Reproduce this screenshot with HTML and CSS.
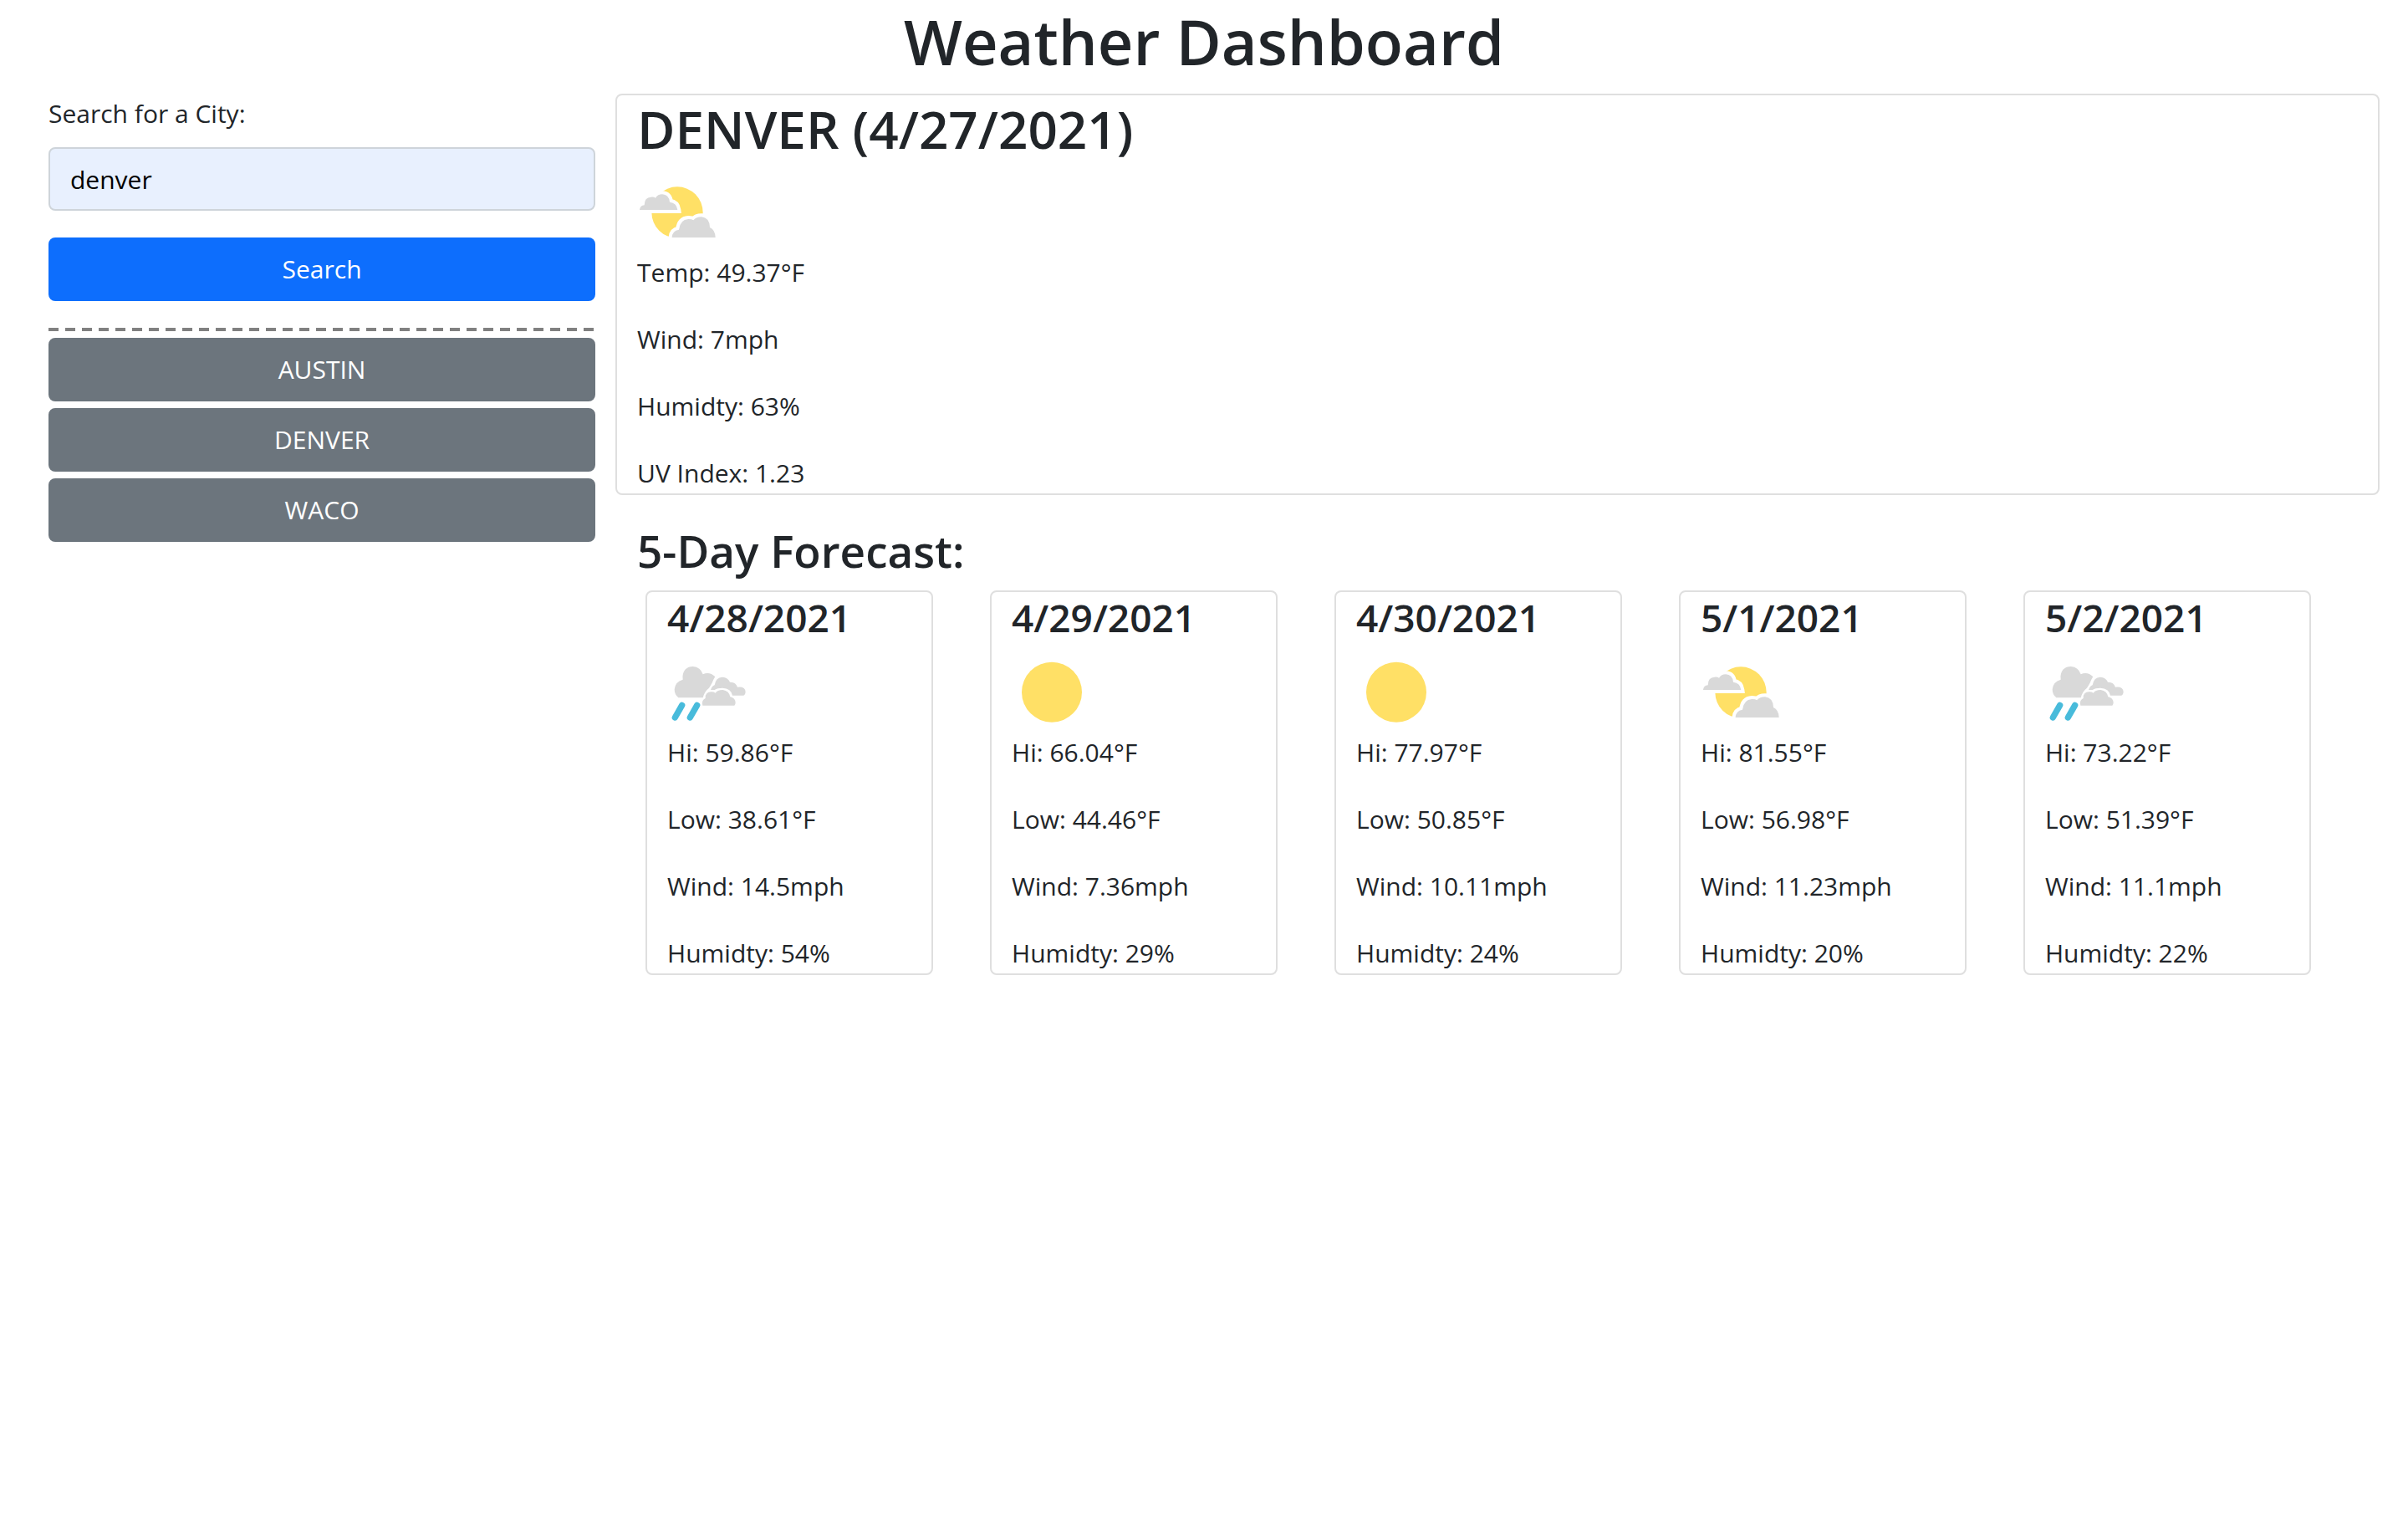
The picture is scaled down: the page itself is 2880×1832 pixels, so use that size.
FILE: index.html
```html
<!DOCTYPE html>
<html lang="en">
<head>
<meta charset="utf-8">
<meta name="viewport" content="width=device-width, initial-scale=1">
<title>Weather Dashboard</title>
<link rel="stylesheet" href="styles.css">
</head>
<body>
<svg class="sprite" aria-hidden="true">
  <symbol id="partly-cloudy" viewBox="42 3 300 285">
    <circle class="sun" cx="186" cy="144" r="92"/>
    <path class="cloud cloud-cut" d="M51 135Q52 120 68 118Q68 90 92 89Q102 88 108 92Q116 79 132 79Q156 80 159 107Q184 110 187 135Z"/>
    <path class="cloud cloud-cut" d="M167 234Q168 210 192 206Q196 170 226 168Q238 168 244 172Q254 160 273 160Q302 163 303 198Q322 206 323 234Z"/>
  </symbol>
  <symbol id="rain" viewBox="54 3 300 285">
    <path class="cloud" d="M94 163Q80 152 80 133Q82 106 110 98C106 64 126 51 146 51Q174 53 182 79Q206 68 226 88C216 102 218 110 204 128Q188 140 182 163Z"/>
    <path class="cloud" d="M210 135Q214 122 224 118Q228 90 252 89Q272 90 279 107Q300 106 306 125Q334 122 335 142Q334 153 328 155L288 155Q284 130 252 128Q234 128 224 135Z"/>
    <path class="cloud" d="M181 191Q176 172 191 165Q190 142 212 142Q222 142 227 146Q234 135 253 135Q276 138 280 160Q299 164 299 182Q298 188 295 191Z"/>
    <path class="drops" d="M82 234L107 190M136 234L161 190"/>
  </symbol>
  <symbol id="clear" viewBox="30 3 300 285">
    <circle class="sun" cx="174" cy="143" r="108"/>
  </symbol>
</svg>

<header>
  <h1 class="page-title">Weather Dashboard</h1>
</header>

<div class="layout">
  <aside class="sidebar">
    <form class="search" onsubmit="return false">
      <label class="search-label" for="city">Search for a City:</label>
      <input class="search-input" id="city" type="text" value="denver">
      <button class="btn btn-primary" type="submit">Search</button>
    </form>
    <hr class="divider">
    <div class="history">
      <button class="btn btn-secondary" type="button">AUSTIN</button>
      <button class="btn btn-secondary" type="button">DENVER</button>
      <button class="btn btn-secondary" type="button">WACO</button>
    </div>
  </aside>

  <main>
    <section class="card">
      <h2 class="city-name">DENVER (4/27/2021)</h2>
      <svg class="icon" role="img" aria-label="Partly cloudy"><use href="#partly-cloudy"/></svg>
      <div class="stats">
        <p>Temp: 49.37°F</p>
        <p>Wind: 7mph</p>
        <p>Humidty: 63%</p>
        <p>UV Index: 1.23</p>
      </div>
    </section>

    <section class="forecast">
      <h3 class="forecast-title">5-Day Forecast:</h3>
      <div class="days">
        <article class="card">
          <h4 class="day-date">4/28/2021</h4>
          <svg class="icon" role="img" aria-label="Rain"><use href="#rain"/></svg>
          <div class="stats">
            <p>Hi: 59.86°F</p>
            <p>Low: 38.61°F</p>
            <p>Wind: 14.5mph</p>
            <p>Humidty: 54%</p>
          </div>
        </article>
        <article class="card">
          <h4 class="day-date">4/29/2021</h4>
          <svg class="icon" role="img" aria-label="Clear"><use href="#clear"/></svg>
          <div class="stats">
            <p>Hi: 66.04°F</p>
            <p>Low: 44.46°F</p>
            <p>Wind: 7.36mph</p>
            <p>Humidty: 29%</p>
          </div>
        </article>
        <article class="card">
          <h4 class="day-date">4/30/2021</h4>
          <svg class="icon" role="img" aria-label="Clear"><use href="#clear"/></svg>
          <div class="stats">
            <p>Hi: 77.97°F</p>
            <p>Low: 50.85°F</p>
            <p>Wind: 10.11mph</p>
            <p>Humidty: 24%</p>
          </div>
        </article>
        <article class="card">
          <h4 class="day-date">5/1/2021</h4>
          <svg class="icon" role="img" aria-label="Partly cloudy"><use href="#partly-cloudy"/></svg>
          <div class="stats">
            <p>Hi: 81.55°F</p>
            <p>Low: 56.98°F</p>
            <p>Wind: 11.23mph</p>
            <p>Humidty: 20%</p>
          </div>
        </article>
        <article class="card">
          <h4 class="day-date">5/2/2021</h4>
          <svg class="icon" role="img" aria-label="Rain"><use href="#rain"/></svg>
          <div class="stats">
            <p>Hi: 73.22°F</p>
            <p>Low: 51.39°F</p>
            <p>Wind: 11.1mph</p>
            <p>Humidty: 22%</p>
          </div>
        </article>
      </div>
    </section>
  </main>
</div>
</body>
</html>
```
FILE: styles.css
```css
*,
*::before,
*::after {
  box-sizing: border-box;
}

body {
  margin: 0;
  background: #fff;
  color: #212529;
  font-family: "Segoe UI", "Open Sans", "Noto Sans", sans-serif;
  font-size: 30px;
  line-height: 48px;
}

h1, h2, h3, h4 {
  margin: 0 0 12px;
  font-weight: 600;
}

p {
  margin: 0;
}

.sprite {
  display: none;
}

.page-title {
  font-size: 74px;
  line-height: 100px;
  text-align: center;
}

.layout {
  display: grid;
  grid-template-columns: minmax(0, 31fr) minmax(0, 100fr);
  gap: 24px;
  padding: 0 34px 0 58px;
}

/* Search column */
.search {
  display: flex;
  flex-direction: column;
}

.search-label {
  margin-bottom: 16px;
}

.search-input {
  height: 76px;
  margin-bottom: 32px;
  padding: 12px 24px;
  border: 2px solid #ced4da;
  border-radius: 8px;
  background: #e8f0fe;
  color: #000;
  font: inherit;
}

.btn {
  height: 76px;
  padding: 12px 24px;
  border: 2px solid transparent;
  border-radius: 8px;
  color: #fff;
  font: inherit;
  line-height: 48px;
  text-align: center;
  cursor: pointer;
}

.btn-primary {
  border-color: #0d6efd;
  background: #0d6efd;
}

.btn-secondary {
  border-color: #6c757d;
  background: #6c757d;
}

.divider {
  height: 4px;
  margin: 32px 0 8px;
  border: 0;
  background: repeating-linear-gradient(90deg, #808080 0 12px, transparent 12px 20px);
}

.history {
  display: flex;
  flex-direction: column;
  gap: 8px;
}

/* Weather cards */
.card {
  padding: 0 24px;
  border: 2px solid #dfdfdf;
  border-radius: 8px;
  background: #fff;
}

.city-name {
  font-size: 62px;
  line-height: 81px;
}

.stats {
  display: flex;
  flex-direction: column;
  gap: 32px;
}

.icon {
  display: block;
  width: 100px;
  height: 95px;
}

.sun {
  fill: #ffe066;
}

.cloud {
  fill: #d9d9d9;
}

.cloud-cut {
  stroke: #fff;
  stroke-width: 24;
  paint-order: stroke;
}

.drops {
  fill: none;
  stroke: #48bbdb;
  stroke-width: 22;
  stroke-linecap: round;
}

/* Forecast */
.forecast {
  margin-top: 32px;
}

.forecast-title {
  padding-left: 26px;
  font-size: 53px;
  line-height: 70px;
}

.days {
  display: grid;
  grid-template-columns: repeat(5, minmax(0, 1fr));
  gap: 68px;
  padding: 0 82px 0 36px;
}

.day-date {
  font-size: 46px;
  line-height: 61px;
}
```
